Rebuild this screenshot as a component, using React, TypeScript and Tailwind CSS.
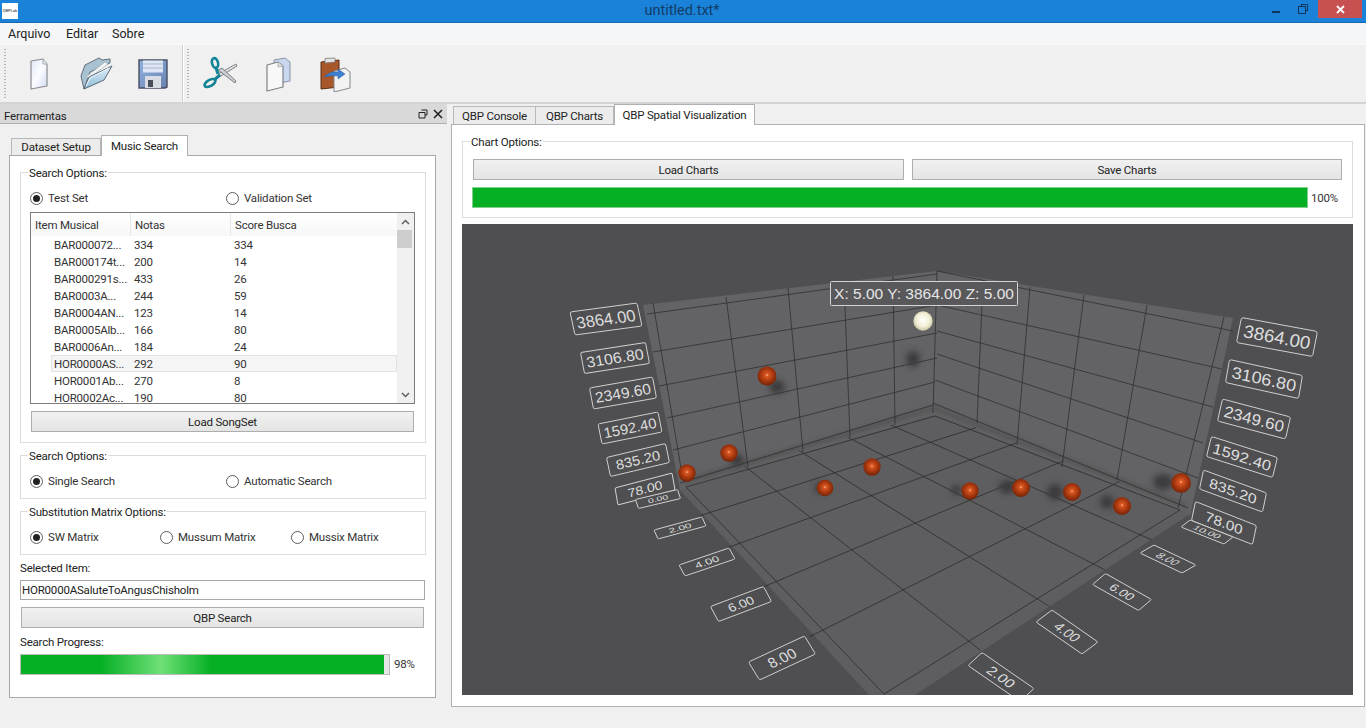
import React from "react";

const FONT = 'Roboto, "Noto Sans", sans-serif';

function Group({ title, className, children }: { title: string; className: string; children: React.ReactNode }) {
  return (
    <div className={"border border-[#dcdcdc] " + className}>
      <div className="-mt-[9px] ml-[7px] h-4 w-fit bg-white px-[1px] leading-[18px]">{title}</div>
      {children}
    </div>
  );
}

function Radio({ label, on, className }: { label: string; on?: boolean; className: string }) {
  return (
    <div className={"flex h-4 items-center gap-[5px] " + className}>
      <span className="flex h-[13px] w-[13px] items-center justify-center rounded-full border border-[#5e5e5e] bg-white">
        {on && <span className="h-[7px] w-[7px] rounded-full bg-[#222]" />}
      </span>
      <span className="leading-4 text-[#333]">{label}</span>
    </div>
  );
}

function Btn({ label, className }: { label: string; className: string }) {
  return (
    <div className={"flex items-center justify-center border border-[#adadad] bg-gradient-to-b from-[#f1f1f1] to-[#e4e4e4] pt-[2px] text-[#222] " + className}>
      {label}
    </div>
  );
}

const rows = [
  ["BAR000072...", "334", "334"],
  ["BAR000174t...", "200", "14"],
  ["BAR000291s...", "433", "26"],
  ["BAR0003A...", "244", "59"],
  ["BAR0004AN...", "123", "14"],
  ["BAR0005Alb...", "166", "80"],
  ["BAR0006An...", "184", "24"],
  ["HOR0000AS...", "292", "90"],
  ["HOR0001Ab...", "270", "8"],
  ["HOR0002Ac...", "190", "80"],
];

function SongTable() {
  return (
    <div className="mt-[6px] ml-[9px] flex h-[192px] w-[385px] overflow-hidden border border-[#7c7c7c] bg-white">
      <div className="w-[366px] shrink-0">
        <div className="flex h-[23px] items-center bg-gradient-to-b from-white to-[#f6f7f8] text-[#333]">
          <div className="h-full w-[100px] border-r border-[#e6e6e6] pl-1 leading-[25px]">Item Musical</div>
          <div className="h-full w-[100px] border-r border-[#e6e6e6] pl-1 leading-[25px]">Notas</div>
          <div className="h-full flex-1 pl-1 leading-[25px]">Score Busca</div>
        </div>
        {rows.map((r, i) => (
          <div
            key={r[0]}
            className={
              "ml-5 flex h-[17px] w-[346px] items-center pt-[2px] leading-[15px] text-[#333] " +
              (i === 7 ? "bg-[#f5f5f5] outline outline-1 -outline-offset-1 outline-[#e2e2e2]" : "")
            }
          >
            <div className="w-[83px] pl-[3px]">{r[0]}</div>
            <div className="w-[100px]">{r[1]}</div>
            <div>{r[2]}</div>
          </div>
        ))}
      </div>
      <div className="flex w-[17px] flex-col bg-[#f0f0f0]">
        <div className="flex h-[17px] items-center justify-center">
          <svg width="9" height="6" viewBox="0 0 9 6"><path d="M1 5 L4.5 1.5 L8 5" fill="none" stroke="#606060" strokeWidth="1.5" /></svg>
        </div>
        <div className="h-[18px] w-[15px] bg-[#cdcdcd]" />
        <div className="flex-1" />
        <div className="flex h-[17px] items-center justify-center">
          <svg width="9" height="6" viewBox="0 0 9 6"><path d="M1 1 L4.5 4.5 L8 1" fill="none" stroke="#606060" strokeWidth="1.5" /></svg>
        </div>
      </div>
    </div>
  );
}

function IconNew() {
  return (
    <svg width="36" height="36" viewBox="0 0 36 36">
      <defs>
        <linearGradient id="gn" x1="0" y1="0" x2="1" y2="1"><stop offset="0" stopColor="#dfe8f8" /><stop offset="0.5" stopColor="#fbfcff" /><stop offset="1" stopColor="#cfdcf2" /></linearGradient>
      </defs>
      <path d="M10 5 L22 3 L26 8 L26 30 L10 33 Z" fill="url(#gn)" stroke="#8b8d92" strokeWidth="1.2" strokeLinejoin="round" />
      <path d="M22 3 L22 8 L26 8" fill="#e8edf5" stroke="#a0a4aa" />
    </svg>
  );
}
function IconOpen() {
  return (
    <svg width="36" height="36" viewBox="0 0 36 36">
      <defs>
        <linearGradient id="go" x1="0" y1="0" x2="0" y2="1"><stop offset="0" stopColor="#e4f1f9" /><stop offset="1" stopColor="#8dbcd8" /></linearGradient>
      </defs>
      <path d="M3 20 L7 9 L21 2 L24 4 L32 3 L32 7 L12 16 L6 33 Z" fill="#a9c2d2" stroke="#5f6f7b" strokeWidth="1" strokeLinejoin="round" />
      <path d="M8 21 L27 6 L30 8 L11 22 Z" fill="#f4f6f6" stroke="#9aa" strokeWidth=".6" />
      <path d="M6 33 L11 21 L34 10 L26 24 Z" fill="url(#go)" stroke="#566874" strokeWidth="1" strokeLinejoin="round" />
      <path d="M8 30 L12 22 L31 12" fill="none" stroke="#f2f8fc" strokeWidth="1" />
    </svg>
  );
}
function IconSave() {
  return (
    <svg width="36" height="36" viewBox="0 0 36 36">
      <defs>
        <linearGradient id="gs" x1="0" y1="0" x2="1" y2="1"><stop offset="0" stopColor="#8fb0e0" /><stop offset="1" stopColor="#6a83b0" /></linearGradient>
      </defs>
      <path d="M4 4 H32 V31 L30 32 H4 Z" fill="url(#gs)" stroke="#474f60" strokeWidth="1.4" />
      <rect x="8" y="4.5" width="20" height="12" fill="#dfe7f4" />
      <path d="M8 8 H28 M8 12 H28" stroke="#a8b6cc" strokeWidth="1.2" />
      <rect x="10" y="20" width="16" height="12" fill="#d9dce2" />
      <rect x="13" y="24" width="5" height="7" fill="#4a4e58" />
    </svg>
  );
}
function IconCut() {
  return (
    <svg width="36" height="36" viewBox="0 0 36 36">
      <path d="M18 20 L34 10 L33 8 L15 18 Z" fill="#dcdfe2" stroke="#6a6e72" strokeWidth=".8" />
      <path d="M15 14 L32 27 L33 25 L19 12 Z" fill="#c9cdd1" stroke="#6a6e72" strokeWidth=".8" />
      <ellipse cx="12" cy="7" rx="3" ry="5" transform="rotate(-15 12 7)" fill="none" stroke="#128496" strokeWidth="2.6" />
      <path d="M13 12 L15 18" stroke="#128496" strokeWidth="3" />
      <ellipse cx="7" cy="27" rx="6" ry="3" transform="rotate(-30 7 27)" fill="none" stroke="#128496" strokeWidth="2.6" />
      <path d="M11 24 L17 19" stroke="#128496" strokeWidth="3" />
    </svg>
  );
}
function IconCopy() {
  return (
    <svg width="36" height="36" viewBox="0 0 36 36">
      <path d="M14 4 L25 2 L30 6 L30 25 L14 28 Z" fill="#c9d8f0" stroke="#8a93a4" strokeWidth="1" strokeLinejoin="round" />
      <path d="M7 9 L18 6 L23 10 L23 31 L7 35 Z" fill="#f8f8f8" stroke="#808286" strokeWidth="1.2" strokeLinejoin="round" />
      <path d="M18 6 L18 11 L23 10" fill="#e2e2e2" stroke="#a0a0a0" strokeWidth=".8" />
    </svg>
  );
}
function IconPaste() {
  return (
    <svg width="36" height="36" viewBox="0 0 36 36">
      <path d="M3 6 L21 4 L21 31 L3 33 Z" fill="#a7572a" stroke="#5b2e14" strokeWidth="1" />
      <path d="M7 2.5 L17 2 L17 6 L7 7 Z" fill="#e4e4e4" stroke="#777" strokeWidth=".8" />
      <path d="M16 15 L27 12 L32 16 L32 32 L16 36 Z" fill="#f2f2f2" stroke="#85878a" strokeWidth="1" strokeLinejoin="round" />
      <path d="M6 21 Q12 15 20 16 L20 13 L27 18 L20 23 L20 20 Q13 19 6 21 Z" fill="#3f7fd0" stroke="#2b5c9c" strokeWidth=".5" />
    </svg>
  );
}

function Handle() {
  return <div className="my-[3px] h-[50px] w-[2px] bg-[repeating-linear-gradient(to_bottom,#b5b5b5_0,#b5b5b5_1px,transparent_1px,transparent_3px)]" />;
}

type Pt = [number, number];

function makeH(p0: Pt, p1: Pt, p2: Pt, p3: Pt) {
  const [x0, y0] = p0, [x1, y1] = p1, [x2, y2] = p2, [x3, y3] = p3;
  const dx1 = x1 - x2, dx2 = x3 - x2, sx = x0 - x1 + x2 - x3;
  const dy1 = y1 - y2, dy2 = y3 - y2, sy = y0 - y1 + y2 - y3;
  const den = dx1 * dy2 - dx2 * dy1;
  const g = (sx * dy2 - dx2 * sy) / den;
  const h = (dx1 * sy - sx * dy1) / den;
  const a = x1 - x0 + g * x1, b = x3 - x0 + h * x3;
  const d = y1 - y0 + g * y1, e = y3 - y0 + h * y3;
  return (u: number, v: number): Pt => {
    const w = g * u + h * v + 1;
    return [(a * u + b * v + x0) / w, (d * u + e * v + y0) / w];
  };
}

const floorH = makeH([935, 416], [1180, 510], [884, 694], [686, 487]);
const floorLines: [Pt, Pt][] = [];
for (let i = 0; i <= 5; i++) {
  const t = i / 5;
  const lo = i === 0 || i === 5 ? 0 : -0.03;
  const hi = i === 0 || i === 5 ? 1 : 1.03;
  floorLines.push([floorH(t, lo), floorH(t, hi)]);
  floorLines.push([floorH(lo, t), floorH(hi, t)]);
}

const wallLines: [number, number, number, number][] = [
  [653, 303, 683, 480], [726, 297, 748, 467], [788, 288, 803, 452], [844, 281, 850, 437], [893, 276, 895, 425], [937, 271, 933, 413],
  [647, 314, 937, 274], [653, 352, 937, 305], [659, 386, 937, 333], [667, 418, 937, 358], [673, 450, 935, 382], [680, 483, 933, 405],
  [937, 271, 1233, 331], [937, 305, 1222, 369], [937, 331, 1213, 407], [937, 354, 1203, 443], [935, 380, 1198, 478], [933, 403, 1188, 508],
  [983, 280, 977, 423], [1030, 287, 1017, 445], [1084, 295, 1062, 467], [1147, 305, 1117, 480], [1224, 317, 1178, 508],
];

const labels: { t: string; c: Pt; w: Pt; h: Pt }[] = [
  { t: "3864.00", c: [606, 319], w: [67, -9], h: [5, 23] },
  { t: "3106.80", c: [615, 358], w: [65, -10], h: [4, 21] },
  { t: "2349.60", c: [623, 393], w: [63, -11], h: [4, 21] },
  { t: "1592.40", c: [630, 428], w: [60, -12], h: [4, 20] },
  { t: "835.20", c: [638, 460], w: [59, -14], h: [4, 19] },
  { t: "78.00", c: [645, 489], w: [57, -15], h: [3, 17] },
  { t: "3864.00", c: [1277, 337], w: [76, 14], h: [-5, 25] },
  { t: "3106.80", c: [1264, 379], w: [73, 16], h: [-4, 23] },
  { t: "2349.60", c: [1254, 419], w: [68, 18], h: [-5, 22] },
  { t: "1592.40", c: [1242, 457], w: [66, 21], h: [-5, 20] },
  { t: "835.20", c: [1233, 491], w: [63, 23], h: [-4, 19] },
  { t: "78.00", c: [1224, 523], w: [61, 24], h: [-4, 19] },
  { t: "0.00", c: [658, 499], w: [42, -10], h: [3, 9] },
  { t: "2.00", c: [680, 528], w: [48, -13], h: [4, 9] },
  { t: "4.00", c: [707, 562], w: [50, -17], h: [6, 11] },
  { t: "6.00", c: [741, 604], w: [53, -20], h: [8, 15] },
  { t: "8.00", c: [782, 658], w: [56, -26], h: [11, 18] },
  { t: "10.00", c: [1207, 532], w: [43, 17], h: [-9, 7] },
  { t: "8.00", c: [1168, 559], w: [42, 20], h: [-14, 8] },
  { t: "6.00", c: [1122, 592], w: [46, 26], h: [-13, 11] },
  { t: "4.00", c: [1067, 632], w: [46, 32], h: [-16, 12] },
  { t: "2.00", c: [1001, 677], w: [52, 36], h: [-14, 13] },
];

const shadows: [number, number, number, number][] = [
  [913, 359, 7, 8], [777, 387, 8, 7], [737, 460, 7, 6], [821, 488, 6, 6], [1007, 487, 8, 7], [1055, 492, 8, 8], [1107, 502, 7, 7], [1163, 482, 10, 8], [956, 490, 5, 5],
];
const spheres: [number, number, number][] = [
  [767, 376, 9.5], [729, 453, 8.7], [687, 473, 8.7], [825, 488, 8.3], [872, 467, 8.7], [970, 491, 8.7], [1021, 488, 9], [1072, 492, 9], [1122, 506, 9], [1181, 483, 10],
];

function Chart() {
  return (
    <svg className="block" width="891" height="471" viewBox="462 224 891 471" fontFamily='"Liberation Sans", Arial, sans-serif' letterSpacing="0">
      <defs>
        <radialGradient id="red" cx="0.5" cy="0.45" r="0.55">
          <stop offset="0" stopColor="#ffc9a0" />
          <stop offset="0.13" stopColor="#dd5a24" />
          <stop offset="0.55" stopColor="#ad3a10" />
          <stop offset="1" stopColor="#742408" />
        </radialGradient>
        <radialGradient id="white" cx="0.5" cy="0.45" r="0.55">
          <stop offset="0" stopColor="#ffffff" />
          <stop offset="0.6" stopColor="#f3f1d8" />
          <stop offset="1" stopColor="#c9c6a4" />
        </radialGradient>
        <filter id="blur" x="-60%" y="-60%" width="220%" height="220%"><feGaussianBlur stdDeviation="3" /></filter>
        <filter id="blur2" x="-5%" y="-5%" width="110%" height="110%"><feGaussianBlur stdDeviation="2" /></filter>
      </defs>
      <rect x="462" y="224" width="891" height="471" fill="#4f4f51" />
      <polygon points="643,305 937,271 1233,318 1190,516 1180,512 935,416 686,490 680,490" fill="#636365" />
      <polygon points="680,490 935,414 1190,514 915,695 869,695" fill="#5e5e60" />
      <path d="M683 482 L934 408 L1186 506" fill="none" stroke="#545456" strokeWidth="5" filter="url(#blur2)" />
      {wallLines.map((l, i) => (
        <line key={i} x1={l[0]} y1={l[1]} x2={l[2]} y2={l[3]} stroke="#303032" strokeWidth="0.8" />
      ))}
      {floorLines.map((l, i) => (
        <line key={i} x1={l[0][0]} y1={l[0][1]} x2={l[1][0]} y2={l[1][1]} stroke="#2c2c2e" strokeWidth="0.8" />
      ))}
      {labels.map((l, i) => (
        <g key={i} transform={`matrix(${l.w[0] / 70} ${l.w[1] / 70} ${l.h[0] / 24} ${l.h[1] / 24} ${l.c[0]} ${l.c[1]})`}>
          <rect x="-35" y="-12" width="70" height="24" rx="2" fill="#4f4f51" stroke="#cfcfcf" strokeWidth="1" vectorEffect="non-scaling-stroke" />
          <text x="0" y="6" textAnchor="middle" fontSize="17" fill="#dedede">{l.t}</text>
        </g>
      ))}
      {shadows.map((s, i) => (
        <ellipse key={i} cx={s[0]} cy={s[1]} rx={s[2]} ry={s[3]} fill="#3a3a3c" filter="url(#blur)" />
      ))}
      {spheres.map((s, i) => (
        <circle key={i} cx={s[0]} cy={s[1]} r={s[2]} fill="url(#red)" />
      ))}
      <circle cx="923" cy="321" r="9.7" fill="url(#white)" />
      <rect x="830.5" y="281.5" width="187" height="24" rx="1" fill="#59595b" stroke="#d4d4d4" strokeWidth="1" />
      <text x="924" y="299" textAnchor="middle" fontSize="15.5" fill="#e6e6e6">X: 5.00 Y: 3864.00 Z: 5.00</text>
    </svg>
  );
}

export default function App() {
  return (
    <div className="flex h-[728px] w-[1366px] flex-col overflow-hidden bg-[#f0f0f0] text-[11.5px] tracking-[-0.2px] text-[#222]" style={{ fontFamily: FONT }}>
      <div className="flex h-[23px] items-start border-b border-[#1669b0] bg-[#1a82d8] tracking-normal">
        <div className="mt-[3px] ml-[2px] flex h-4 w-4 items-center justify-center overflow-hidden bg-white text-[4px] leading-none text-[#222]">QBPLab</div>
        <div className="flex-1 pl-[74px] pt-[1px] text-center text-[14.5px] leading-[20px] text-[#123d66]">untitled.txt*</div>
        <div className="mt-[11px] h-[2px] w-2 bg-[#10375a]" />
        <div className="relative mt-[4px] ml-[18px] h-[10px] w-[10px]">
          <div className="absolute top-0 right-0 h-[7px] w-[7px] border border-[#10375a]" />
          <div className="absolute bottom-0 left-0 h-[8px] w-[8px] border border-[#10375a] bg-[#1a82d8]" />
        </div>
        <div className="ml-[10px] mr-1 flex h-[18px] w-[44px] items-center justify-center bg-[#c75050]">
          <svg width="9" height="9" viewBox="0 0 9 9"><path d="M1 1 L8 8 M8 1 L1 8" stroke="#fff" strokeWidth="1.8" /></svg>
        </div>
      </div>

      <div className="flex h-[21px] items-center bg-[#f5f6f7] pl-2 pt-[1px] text-[12.5px] tracking-normal text-[#222]">
        <span className="w-[58px]">Arquivo</span>
        <span className="w-[46px]">Editar</span>
        <span>Sobre</span>
      </div>

      <div className="flex h-[60px] items-center border-t border-[#fafafa] border-b-2 border-b-[#d4d4d4] bg-[#f0f0f0] pl-1">
        <Handle />
        <div className="ml-[4px] flex">
          <div className="flex w-[57px] justify-center"><IconNew /></div>
          <div className="flex w-[57px] justify-center"><IconOpen /></div>
          <div className="flex w-[57px] justify-center"><IconSave /></div>
        </div>
        <div className="ml-[1px] h-full w-[2px] border-l border-[#cfcfcf] bg-white" />
        <div className="ml-[3px]"><Handle /></div>
        <div className="ml-[3px] flex">
          <div className="flex w-[57px] justify-center"><IconCut /></div>
          <div className="flex w-[57px] justify-center"><IconCopy /></div>
          <div className="flex w-[60px] justify-center"><IconPaste /></div>
        </div>
      </div>

      <div className="flex flex-1">
        <div className="w-[447px] shrink-0">
          <div className="flex h-[20px] items-center border-b border-[#b0b0b0] bg-[#d9d9d9] pl-1 pr-[4px] pt-[4px]">
            <span className="flex-1 leading-4">Ferramentas</span>
            <svg width="10" height="10" viewBox="0 0 10 10" className="mr-[5px] -mt-[3px]"><path d="M3.5 1 H9 V6 H7 M1 3.5 H7 V9 H1 Z" fill="none" stroke="#222" strokeWidth="1" /></svg>
            <svg width="10" height="10" viewBox="0 0 10 10" className="-mt-[3px]"><path d="M1 1 L9 9 M9 1 L1 9" stroke="#222" strokeWidth="1.6" /></svg>
          </div>
          <div className="ml-[9px] mt-[10px] w-[427px]">
            <div className="flex h-[21px] items-end pl-[2px]">
              <div className="flex h-[17px] w-[90px] items-center justify-center whitespace-nowrap border border-b-0 border-[#b8b8b8] bg-[#ececec] pt-[2px]">Dataset Setup</div>
              <div className="relative z-10 -mb-px flex h-[21px] w-[87px] items-center justify-center whitespace-nowrap border border-b-0 border-[#b0b0b0] bg-white pt-[1px]">Music Search</div>
            </div>
            <div className="h-[543px] border border-[#a8a8a8] bg-white pl-[10px] pt-[16px]">
              <Group title="Search Options:" className="h-[271px] w-[406px]">
                <div className="mt-[10px] flex pl-[9px]">
                  <Radio label="Test Set" on className="w-[196px]" />
                  <Radio label="Validation Set" className="" />
                </div>
                <SongTable />
                <Btn label="Load SongSet" className="mt-[7px] ml-[10px] h-[21px] w-[383px]" />
              </Group>
              <Group title="Search Options:" className="mt-[12px] h-[44px] w-[406px]">
                <div className="mt-[10px] flex pl-[9px]">
                  <Radio label="Single Search" on className="w-[196px]" />
                  <Radio label="Automatic Search" className="" />
                </div>
              </Group>
              <Group title="Substitution Matrix Options:" className="mt-[12px] h-[44px] w-[406px]">
                <div className="mt-[10px] flex pl-[9px]">
                  <Radio label="SW Matrix" on className="w-[130px]" />
                  <Radio label="Mussum Matrix" className="w-[131px]" />
                  <Radio label="Mussix Matrix" className="" />
                </div>
              </Group>
              <div className="mt-[5px] h-4 leading-4">Selected Item:</div>
              <div className="mt-[4px] flex h-[20px] w-[405px] items-center border border-[#a9a9a9] bg-white pl-[1px] pt-[2px]">HOR0000ASaluteToAngusChisholm</div>
              <Btn label="QBP Search" className="mt-[7px] ml-[1px] h-[21px] w-[403px]" />
              <div className="mt-[6px] h-4 leading-4">Search Progress:</div>
              <div className="mt-[4px] flex items-center">
                <div className="h-[21px] w-[370px] border border-[#bcbcbc] bg-[#e6e6e6]">
                  <div className="h-full w-[363px] bg-[linear-gradient(to_right,#06b025_0,#06b025_80px,#6fe077_140px,#06b025_190px,#06b025_100%)]" />
                </div>
                <span className="ml-1 text-[#333]">98%</span>
              </div>
            </div>
          </div>
        </div>

        <div className="ml-[4px]">
          <div className="flex h-[20px] items-end pl-[2px]">
            <div className="flex h-[18px] w-[83px] items-center justify-center whitespace-nowrap border border-b-0 border-[#b8b8b8] bg-[#ececec] pt-[3px]">QBP Console</div>
            <div className="flex h-[18px] w-[78px] items-center justify-center whitespace-nowrap border border-b-0 border-l-0 border-[#b8b8b8] bg-[#ececec] pt-[3px]">QBP Charts</div>
            <div className="relative z-10 -mb-px flex h-[21px] w-[141px] items-center justify-center whitespace-nowrap border border-b-0 border-[#b0b0b0] bg-white pt-[1px]">QBP Spatial Visualization</div>
          </div>
          <div className="h-[583px] w-[914px] border border-[#b0b0b0] bg-white pl-[10px] pt-[16px]">
            <Group title="Chart Options:" className="h-[77px] w-[891px]">
              <div className="mt-[10px] flex gap-2 pl-[10px]">
                <Btn label="Load Charts" className="h-[21px] w-[431px]" />
                <Btn label="Save Charts" className="h-[21px] w-[430px]" />
              </div>
              <div className="mt-[7px] flex items-center pl-[9px]">
                <div className="h-[21px] w-[836px] border border-[#7fd08c] bg-[#06b025]" />
                <span className="ml-[3px] pt-[2px] text-[#333]">100%</span>
              </div>
            </Group>
            <div className="mt-[6px]"><Chart /></div>
          </div>
        </div>
      </div>
    </div>
  );
}
